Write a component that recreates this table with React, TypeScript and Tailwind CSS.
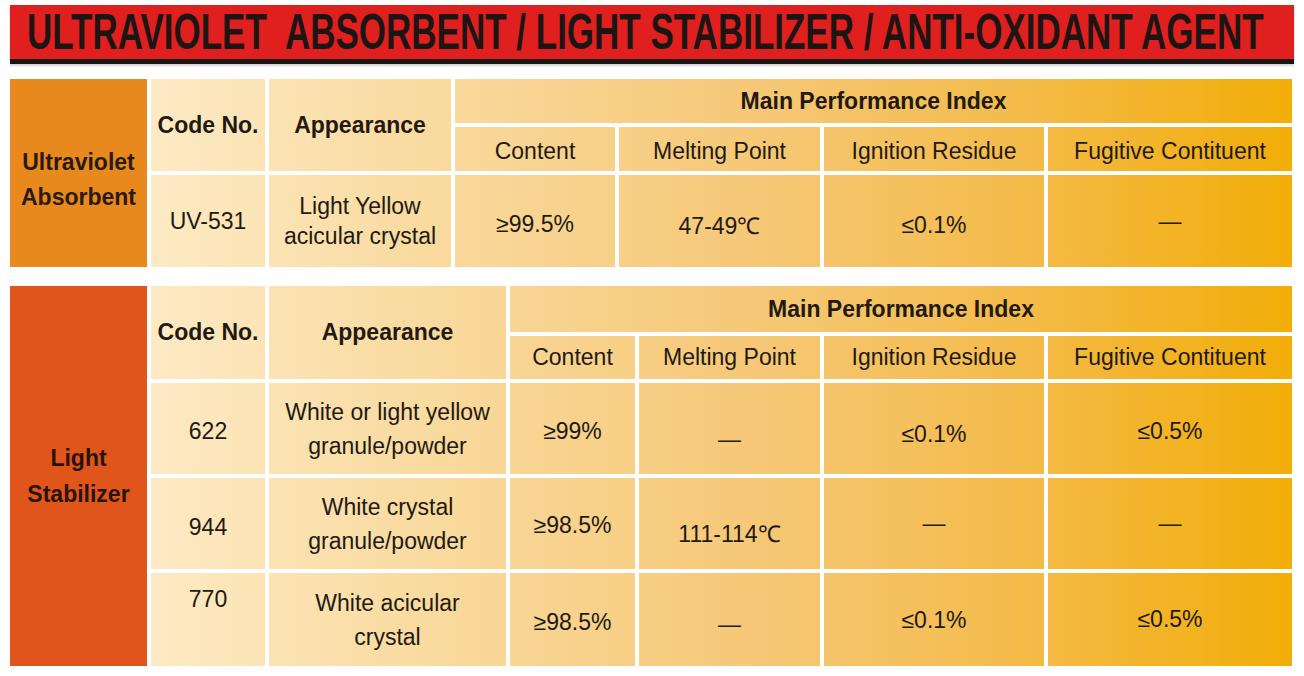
import type { ReactNode } from "react";

// Product spec sheet: a red title band and two tables on a cream-to-amber gradient.
// Cells share one viewport-fixed gradient so the colour runs across the whole table.

const CELL =
  "flex items-center justify-center text-center bg-fixed bg-[linear-gradient(90deg,#fdeac4_150px,#f9d99c_450px,#f6c877_750px,#f4bc4e_1000px,#f2ad08_1292px)]";

function Cell({ children, className = "" }: { children?: ReactNode; className?: string }) {
  return <div className={`${CELL} ${className}`}>{children}</div>;
}

function Head({ children, className = "" }: { children: ReactNode; className?: string }) {
  return <Cell className={`font-bold text-[23px] ${className}`}>{children}</Cell>;
}

function Lines({ lines, leading }: { lines: string[]; leading: string }) {
  return (
    <span className={`block ${leading}`}>
      {lines.map((l) => (
        <span key={l} className="block whitespace-nowrap">
          {l}
        </span>
      ))}
    </span>
  );
}

const SUBHEADS = ["Content", "Melting Point", "Ignition Residue", "Fugitive Contituent"];

export default function App() {
  return (
    <div className="w-[1304px] h-[676px] bg-white px-[10px] pt-[5px] font-['Liberation_Sans',Arial,sans-serif] text-[#221a12]">
      {/* title band */}
      <div className="flex h-[59px] items-center justify-center overflow-hidden border-b-[5px] border-[#1b1514] bg-[#e0201f] shadow-[0_2px_2px_rgba(0,0,0,0.18)]">
        <span className="inline-block shrink-0 translate-x-[-7px] scale-x-[0.7] whitespace-nowrap text-[50px] font-bold leading-none text-[#1d1513]">
          ULTRAVIOLET&nbsp; ABSORBENT / LIGHT STABILIZER / ANTI-OXIDANT AGENT
        </span>
      </div>

      {/* ultraviolet absorbent */}
      <div className="mt-[15px] grid grid-cols-[137px_114px_182px_160px_201px_220px_244px] grid-rows-[44px_44px_92px] gap-[4px] text-[23px]">
        <div className="row-span-3 flex items-center justify-center bg-[#e8891e] pt-[14px] text-center text-[23px] font-bold leading-[35px] text-[#2b1a0c]">
          <span>
            Ultraviolet
            <br />
            Absorbent
          </span>
        </div>
        <Head className="row-span-2">Code No.</Head>
        <Head className="row-span-2">Appearance</Head>
        <Head className="col-span-4 text-[22px]">Main Performance Index</Head>
        {SUBHEADS.map((s) => (
          <Cell key={s} className="pt-[4px]">
            {s}
          </Cell>
        ))}
        <Cell>UV-531</Cell>
        <Cell>
          <Lines lines={["Light Yellow", "acicular crystal"]} leading="leading-[30px]" />
        </Cell>
        <Cell className="pt-[6px]">≥99.5%</Cell>
        <Cell className="pt-[10px]">47-49℃</Cell>
        <Cell className="pt-[8px]">≤0.1%</Cell>
        <Cell>—</Cell>
      </div>

      {/* light stabilizer */}
      <div className="mt-[19px] grid grid-cols-[137px_114px_237px_125px_181px_220px_244px] grid-rows-[46px_43px_91px_91px_93px] gap-[4px] text-[23px]">
        <div className="row-span-5 flex items-center justify-center bg-[#e0561a] text-center text-[23px] font-bold leading-[36px] text-[#2b1208]">
          <span>
            Light
            <br />
            Stabilizer
          </span>
        </div>
        <Head className="row-span-2">Code No.</Head>
        <Head className="row-span-2">Appearance</Head>
        <Head className="col-span-4 text-[22px]">Main Performance Index</Head>
        {SUBHEADS.map((s) => (
          <Cell key={s}>{s}</Cell>
        ))}

        <Cell className="pt-[6px]">622</Cell>
        <Cell>
          <Lines lines={["White or light yellow", "granule/powder"]} leading="leading-[34px]" />
        </Cell>
        <Cell className="pt-[6px]">≥99%</Cell>
        <Cell className="pt-[22px]">—</Cell>
        <Cell className="pt-[12px]">≤0.1%</Cell>
        <Cell className="pt-[6px]">≤0.5%</Cell>

        <Cell className="pt-[8px]">944</Cell>
        <Cell>
          <Lines lines={["White crystal", "granule/powder"]} leading="leading-[34px]" />
        </Cell>
        <Cell className="pt-[4px]">≥98.5%</Cell>
        <Cell className="pt-[22px]">111-114℃</Cell>
        <Cell>—</Cell>
        <Cell>—</Cell>

        <Cell className="pb-[40px]">770</Cell>
        <Cell>
          <Lines lines={["White acicular", "crystal"]} leading="leading-[34px]" />
        </Cell>
        <Cell className="pt-[6px]">≥98.5%</Cell>
        <Cell className="pt-[10px]">—</Cell>
        <Cell className="pt-[2px]">≤0.1%</Cell>
        <Cell>≤0.5%</Cell>
      </div>
    </div>
  );
}
